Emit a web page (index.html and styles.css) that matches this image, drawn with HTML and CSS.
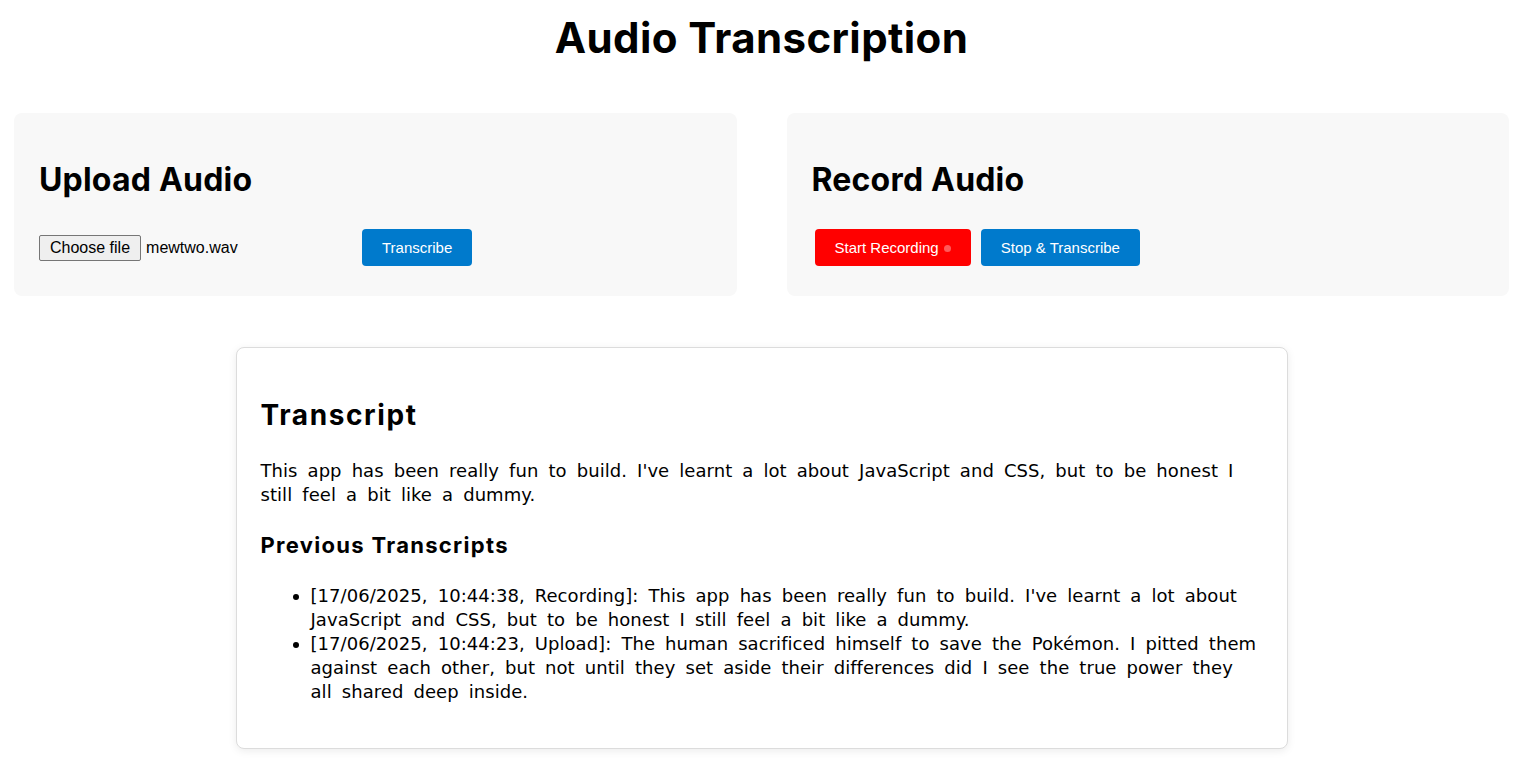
FILE: index.html
```html
<!DOCTYPE html>
<html lang="en">
<head>
<meta charset="utf-8">
<title>Audio Transcription</title>
<link rel="stylesheet" href="styles.css">
</head>
<body>
<h1 class="title">Audio Transcription</h1>
<div class="panels">
  <section class="panel">
    <h2 class="panel-title">Upload Audio</h2>
    <div class="row">
      <label class="file-picker">
        <span class="file-btn">Choose file</span>
        <span class="file-name">mewtwo.wav</span>
      </label>
      <button class="btn btn-blue upload-btn">Transcribe</button>
    </div>
  </section>
  <section class="panel">
    <h2 class="panel-title">Record Audio</h2>
    <div class="row rec-row">
      <button class="btn btn-red">Start Recording <span class="rec-dot"></span></button>
      <button class="btn btn-blue">Stop &amp; Transcribe</button>
    </div>
  </section>
</div>
<section class="transcript">
  <h2 class="transcript-title">Transcript</h2>
  <p class="transcript-text">This app has been really fun to build. I've learnt a lot about JavaScript and CSS, but to be honest I still feel a bit like a dummy.</p>
  <h3 class="history-title">Previous Transcripts</h3>
  <ul class="history">
    <li>[17/06/2025, 10:44:38, Recording]: This app has been really fun to build. I've learnt a lot about JavaScript and CSS, but to be honest I still feel a bit like a dummy.</li>
    <li>[17/06/2025, 10:44:23, Upload]: The human sacrificed himself to save the Pokémon. I pitted them against each other, but not until they set aside their differences did I see the true power they all shared deep inside.</li>
  </ul>
</section>
</body>
</html>
```
FILE: styles.css
```css
* { box-sizing: border-box; }
body {
  margin: 0;
  padding: 0 18px 18px 14px;
  font-family: "DejaVu Sans", sans-serif;
  color: #000;
  background: #fff;
}
.title {
  margin: 14px 0 51px;
  font-family: Inter, sans-serif;
  font-size: 42px;
  letter-spacing: 0.4px;
  line-height: 48px;
  font-weight: 700;
  text-align: center;
}
.panels {
  display: grid;
  grid-template-columns: 1fr 1fr;
  gap: 50px;
}
.panel {
  background: #f8f8f8;
  border-radius: 8px;
  padding: 25px 25px 30px;
}
.panel-title {
  margin: 22px 0 29px;
  font-family: Inter, sans-serif;
  font-size: 32px;
  letter-spacing: 0.2px;
  line-height: 40px;
  font-weight: 700;
}
.row {
  display: flex;
  align-items: center;
  height: 37px;
}
.file-picker {
  display: flex;
  align-items: center;
  width: 323px;
  font-family: "Liberation Sans", Arial, sans-serif;
  font-size: 16px;
}
.file-btn {
  display: inline-block;
  padding: 1px 10px;
  height: 26px;
  line-height: 22px;
  background: #efefef;
  border: 1px solid #767676;
  border-radius: 2px;
  margin-right: 5px;
}
.btn {
  height: 37px;
  padding: 0 20px;
  border: none;
  border-radius: 4px;
  color: #fff;
  font-family: "Liberation Sans", Arial, sans-serif;
  font-size: 15px;
  display: inline-flex;
  align-items: center;
}
.btn-blue { background: #007acc; }
.btn-red { background: #ff0000; }
.rec-row { padding-left: 3px; gap: 10px; }
.rec-dot {
  display: inline-block;
  width: 7px;
  height: 7px;
  border-radius: 50%;
  background: #ff5a5a;
  margin-left: 5px;
  margin-top: 1px;
}
.transcript {
  max-width: 1052px;
  margin: 51px auto 0;
  background: #fff;
  border: 1px solid #dcdcdc;
  border-radius: 8px;
  box-shadow: 0 2px 8px rgba(0,0,0,0.08);
  padding: 24px;
}
.transcript-title {
  margin: 26px 0 27px;
  font-family: Inter, sans-serif;
  font-size: 28px;
  letter-spacing: 1.6px;
  line-height: 34px;
  font-weight: 700;
}
.transcript-text {
  margin: 0;
  font-size: 18px;
  letter-spacing: 0.05px;
  word-spacing: 4.3px;
  line-height: 24px;
}
.history-title {
  margin: 24px 0 25px;
  font-family: Inter, sans-serif;
  font-size: 22px;
  letter-spacing: 1.3px;
  line-height: 28px;
  font-weight: 700;
}
.history {
  margin: 0 0 20px;
  padding-left: 50px;
  font-size: 18px;
  letter-spacing: 0.05px;
  word-spacing: 4.3px;
  line-height: 24px;
}
```
